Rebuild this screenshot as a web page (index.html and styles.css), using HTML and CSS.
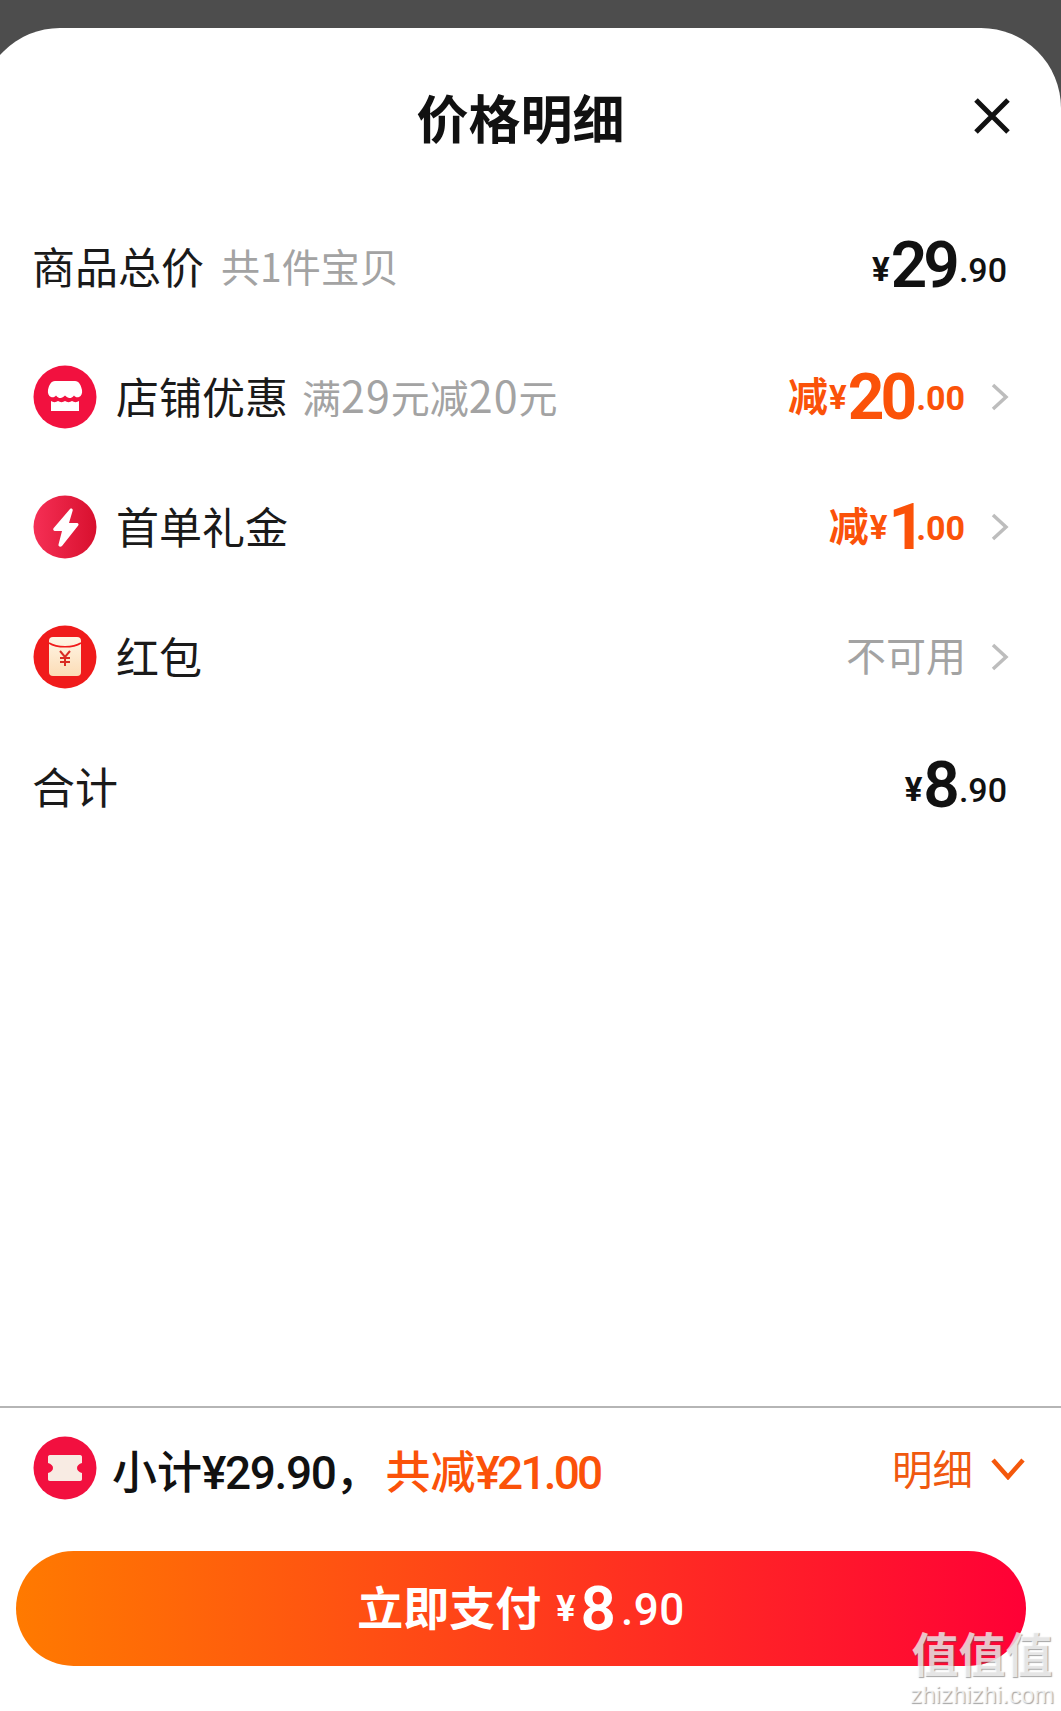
FILE: index.html
```html
<!DOCTYPE html>
<html lang="zh-CN">
<head>
<meta charset="utf-8">
<title>价格明细</title>
<link rel="stylesheet" href="styles.css">
</head>
<body>
<div class="page">
  <section class="sheet">
    <header class="head">
      <h1 class="title">价格明细</h1>
      <svg class="close" viewBox="0 0 36 36"><path d="M2 2 34 34M34 2 2 34"/></svg>
    </header>

    <div class="row">
      <span class="label">商品总价</span><span class="hint">共1件宝贝</span>
      <span class="amount plain"><i class="yen">¥</i><b class="big">29</b><i class="dec">.90</i></span>
    </div>

    <div class="row">
      <svg class="badge" viewBox="0 0 64 64"><circle cx="32" cy="32" r="31.5" fill="#f2113f"/><path fill="#fff" d="M22 16h20c4 0 6 4 7 9 .5 3-.5 6-3 7-2 .8-4 0-5-1.500-1.500 2-3 2.500-4.500 2.500s-3-1-4.500-2.500c-1.500 1.500-3 2.500-4.500 2.500s-3-.5-4.500-2.500c-1 1.500-3 2.300-5 1.500-2.500-1-3.500-4-3-7 1-5 3-9 7-9z"/><path fill="#fff" d="M18 36c2 1.500 5 1.500 7 0 2 1.500 5 1.500 7 0 2 1.500 5 1.500 7 0 2 1.500 5 1.500 7 0v10H18z"/></svg>
      <span class="label">店铺优惠</span><span class="hint near">满<span class="wide">29</span>元减<span class="wide">20</span>元</span>
      <span class="amount promo"><em class="cut">减</em><i class="yen">¥</i><b class="big">20</b><i class="dec">.00</i></span>
      <svg class="chev" viewBox="0 0 18 28"><path d="M2 2 15 14 2 26"/></svg>
    </div>

    <div class="row">
      <svg class="badge" viewBox="0 0 64 64"><defs><linearGradient id="bolt"><stop offset="0" stop-color="#f52f55"/><stop offset="1" stop-color="#d8102e"/></linearGradient></defs><circle cx="32" cy="32" r="31.500" fill="url(#bolt)"/><path fill="#fff" d="M37 14c1.500-1 3 0 2.700 1.500L36 28h8c1.500 0 2 1.500 1.200 2.500L29 51c-1.500 1.500-4 .5-3.500-1.500L29 36h-7c-1.500 0-2.300-1.500-1.500-2.700z"/></svg>
      <span class="label">首单礼金</span>
      <span class="amount promo"><em class="cut">减</em><i class="yen">¥</i><b class="big one">1</b><i class="dec">.00</i></span>
      <svg class="chev" viewBox="0 0 18 28"><path d="M2 2 15 14 2 26"/></svg>
    </div>

    <div class="row">
      <svg class="badge" viewBox="0 0 64 64"><defs><linearGradient id="env" x1="0" y1="0" x2="0" y2="1"><stop offset="0" stop-color="#fff6e6"/><stop offset="1" stop-color="#fcdcb6"/></linearGradient></defs><circle cx="32" cy="32" r="31.500" fill="#f01b1b"/><rect x="16" y="12" width="32" height="39" rx="4" fill="url(#env)"/><path d="M16 18c8 5 24 5 32 0" fill="none" stroke="#f01b1b" stroke-width="1.500"/><path d="M27 26l5 6 5-6M32 32v9M27 33h10M27 37h10" fill="none" stroke="#d92b24" stroke-width="2"/></svg>
      <span class="label">红包</span>
      <span class="off">不可用</span>
      <svg class="chev" viewBox="0 0 18 28"><path d="M2 2 15 14 2 26"/></svg>
    </div>

    <div class="row">
      <span class="label">合计</span>
      <span class="amount plain"><i class="yen">¥</i><b class="big">8</b><i class="dec">.90</i></span>
    </div>

    <footer class="foot">
      <div class="summary">
        <svg class="badge" viewBox="0 0 64 64"><circle cx="32" cy="32" r="31.500" fill="#f2103f"/><path fill="#f8ebe3" d="M17 19h30c1.500 0 2 1 2 2v6c-3 1-5 2.500-5 5s2 4 5 5v6c0 1-.5 2-2 2H17c-1.500 0-2-1-2-2v-6c3-1 5-2.500 5-5s-2-4-5-5v-6c0-1 .5-2 2-2z"/></svg>
        <span class="sum-text">小计<span class="num">¥29.90</span>，<span class="sum-cut">共减<span class="num tight">¥21.00</span></span></span>
        <span class="more">明细</span>
        <svg class="down" viewBox="0 0 34 22"><path d="M2 2 17 19 32 2"/></svg>
      </div>
      <button class="pay"><span class="pay-label">立即支付</span><span class="pay-price"><i class="pay-yen">¥</i><b class="pay-big">8</b><i class="pay-dec">.90</i></span></button>
    </footer>
  </section>
  <div class="mark"><div class="mark-cn">值值值</div><div class="mark-en">zhizhizhi.com</div></div>
</div>
</body>
</html>
```

FILE: styles.css
```css
* { box-sizing: border-box; }
html, body { margin: 0; padding: 0; }
body { background: #4d4d4d; font-family: "Noto Sans CJK SC", "Noto Sans", sans-serif; color: #111; }
i, em { font-style: normal; }

.page { position: relative; width: 1061px; height: 1711px; overflow: hidden; padding-top: 28px; display: flex; }
.sheet { flex: none; width: 1081px; margin-left: -20px; background: #fff; border-radius: 80px 80px 0 0; display: flex; flex-direction: column; }

.head { position: relative; height: 174px; padding-top: 53px; text-align: center; }
.title { margin: 0; font-size: 52px; line-height: 72px; font-weight: 700; color: #111; }
.close { position: absolute; left: 994px; top: 70px; width: 36px; height: 36px; }
.close path { fill: none; stroke: #111; stroke-width: 5; }

.row { height: 130px; padding: 0 52px 0 53px; display: flex; align-items: center; }
.badge { flex: none; width: 64px; height: 64px; }
.label { margin-left: 19px; padding-bottom: 5px; font-size: 43px; line-height: 60px; color: #1a1a1a; }
.label:first-child { margin-left: -1px; }
.hint { margin-left: 17px; padding-bottom: 5px; font-size: 39px; line-height: 60px; color: #a3a3a3; }
.near { margin-left: 14px; }
.wide { font-size: 43px; letter-spacing: 1px; }
.off { margin-left: auto; padding-bottom: 7px; font-size: 40px; line-height: 60px; color: #a3a3a3; }
.off + .chev { margin-left: 25px; }

.amount { margin-left: auto; display: flex; align-items: center; font-family: Roboto, "Noto Sans CJK SC", sans-serif; line-height: 60px; }
.plain { color: #111; margin-right: 2px; }
.plain .yen, .plain .dec { padding-top: 6px; }
.plain .big { padding-bottom: 2px; font-weight: 600; }
.promo { color: #fb5209; padding-top: 2px; }
.promo + .chev { margin-left: 26px; }
.promo .dec { font-weight: 700; }
.cut { padding-bottom: 8px; font-family: "Noto Sans CJK SC", sans-serif; font-size: 40px; font-weight: 700; margin-right: 1px; }
.yen { font-size: 33px; font-weight: 700; margin-right: 1px; }
.big { font-size: 64px; font-weight: 700; letter-spacing: -4px; }
.one { letter-spacing: -12px; }
.dec { font-size: 34px; font-weight: 500; letter-spacing: 0; margin-left: 3px; }
.chev { flex: none; width: 18px; height: 28px; }
.chev path { fill: none; stroke: #bdbdbd; stroke-width: 3.500; }

.foot { margin-top: auto; border-top: 2px solid #b5b5b5; }
.summary { height: 120px; padding: 0 36px 0 53px; display: flex; align-items: center; }
.sum-text { margin-left: 15px; padding-top: 6px; font-size: 45px; line-height: 60px; font-weight: 500; color: #111; white-space: nowrap; }
.num { font-family: Roboto, sans-serif; font-weight: 500; font-size: 46px; letter-spacing: -1.400px; }
.tight { letter-spacing: -2.800px; }
.sum-cut { margin-left: 5px; color: #fb5209; }
.more { margin-left: auto; font-size: 40.500px; line-height: 60px; color: #f0590f; }
.down { flex: none; width: 34px; height: 22px; margin-left: 18px; margin-top: 2px; }
.down path { fill: none; stroke: #f4580c; stroke-width: 4.500; }

.pay { display: flex; align-items: center; justify-content: center; width: 1010px; height: 115px; margin: 23px 0 45px 36px; padding: 0; border: 0; border-radius: 58px; background: linear-gradient(90deg, #ff7a00, #ff0036); color: #fff; font-family: "Noto Sans CJK SC", sans-serif; font-size: 46px; line-height: 66px; font-weight: 700; }
.pay-label { padding-bottom: 8px; }
.pay-price { display: flex; align-items: center; margin-left: 15px; font-family: Roboto, sans-serif; font-weight: 500; }
.pay-yen { font-size: 36px; font-weight: 700; margin-right: 5px; }
.pay-big { font-size: 62px; font-weight: 600; }
.pay-dec { padding-top: 2px; font-size: 44px; letter-spacing: .500px; margin-left: 5px; }

.mark { position: absolute; left: 910px; top: 1621px; width: 144px; text-align: center; color: rgba(255,255,255,.72); text-shadow: 1px 1px 1px rgba(90,90,90,.55); }
.mark-cn { font-size: 47px; line-height: 62px; font-weight: 700; white-space: nowrap; }
.mark-en { font-family: "Liberation Sans", sans-serif; font-size: 24px; line-height: 24px; white-space: nowrap; }
```
